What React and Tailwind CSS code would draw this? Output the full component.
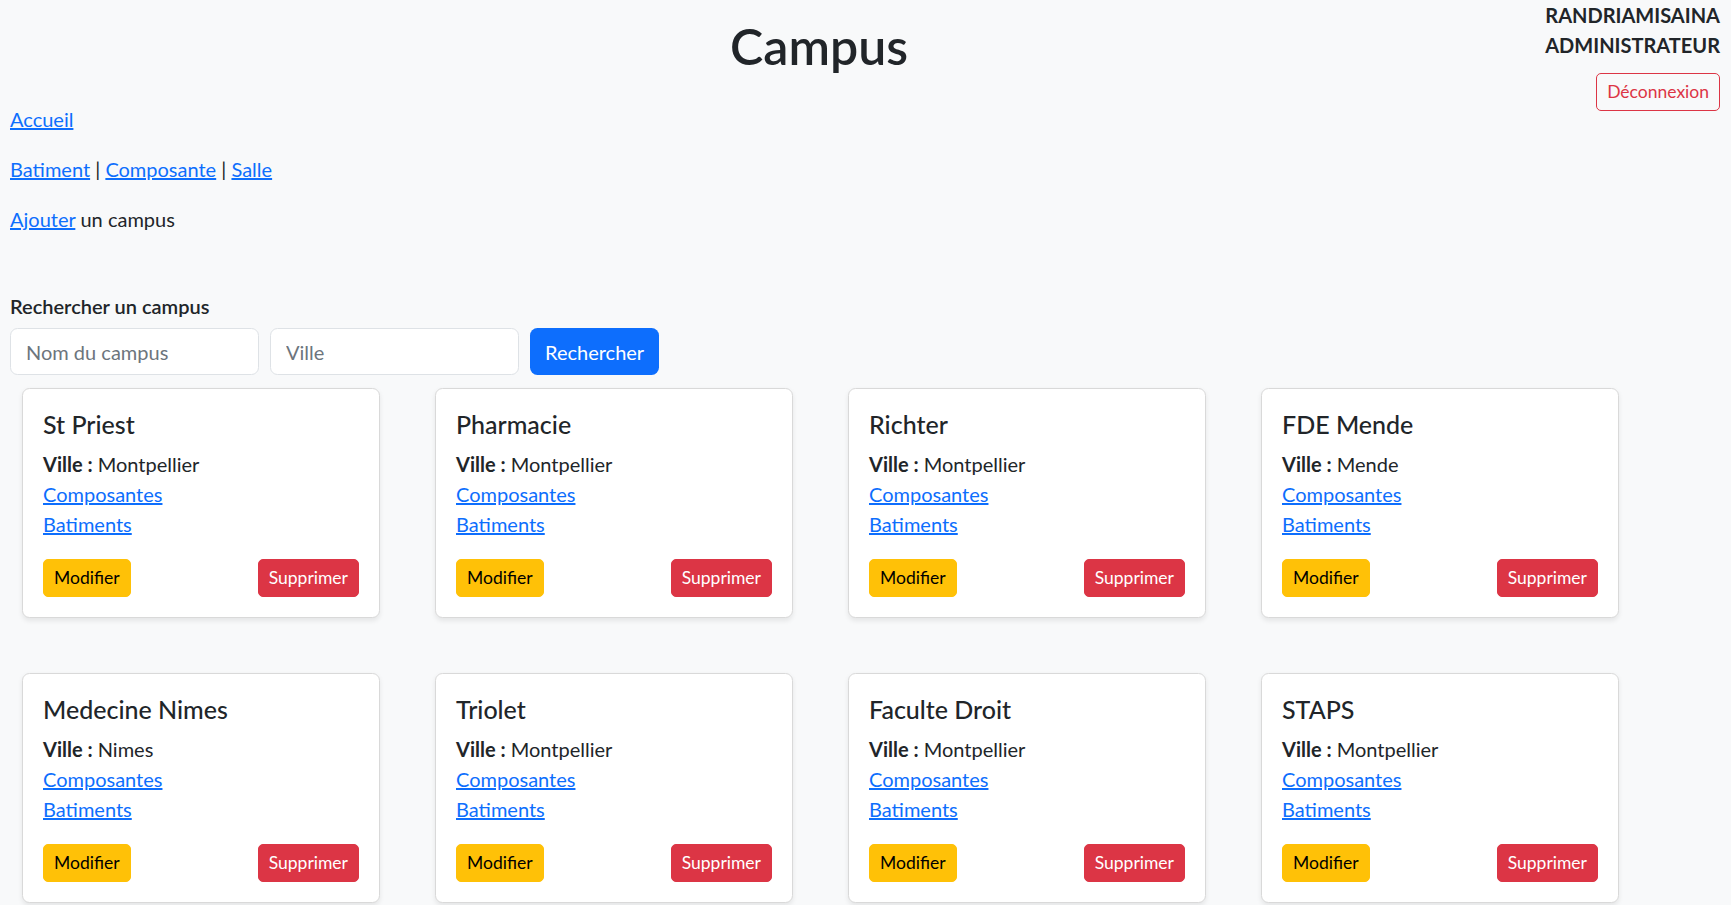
import React from "react";

const campuses = [
  { nom: "St Priest", ville: "Montpellier" },
  { nom: "Pharmacie", ville: "Montpellier" },
  { nom: "Richter", ville: "Montpellier" },
  { nom: "FDE Mende", ville: "Mende" },
  { nom: "Medecine Nimes", ville: "Nimes" },
  { nom: "Triolet", ville: "Montpellier" },
  { nom: "Faculte Droit", ville: "Montpellier" },
  { nom: "STAPS", ville: "Montpellier" },
];

const link = "text-[#0d6efd] underline";

const CampusCard = ({ campus }) => (
  <div className="w-[358px] bg-white border border-[#d9d9d9] rounded-[7.5px] shadow-[0_2.5px_5px_rgba(0,0,0,0.08)] p-[20px]">
    <h5 className="text-[25px] leading-[30px] font-medium mb-[10px]">{campus.nom}</h5>
    <p className="leading-[30px]">
      <b>Ville :</b> {campus.ville}
    </p>
    <p className="leading-[30px]">
      <a href="#" className={link}>Composantes</a>
    </p>
    <p className="leading-[30px]">
      <a href="#" className={link}>Batiments</a>
    </p>
    <div className="flex justify-between mt-[20px]">
      <button className="bg-[#ffc107] text-black text-[17.5px] leading-[26px] px-[10px] py-[5px] border border-[#ffc107] rounded-[5px]">
        Modifier
      </button>
      <button className="bg-[#dc3545] text-white text-[17.5px] leading-[26px] px-[10px] py-[5px] border border-[#dc3545] rounded-[5px]">
        Supprimer
      </button>
    </div>
  </div>
);

export default function App() {
  return (
    <div className="min-h-screen bg-[#f8f9fa] text-[#212529] text-[20px] leading-[30px] font-['Lato','Liberation_Sans',sans-serif]">
      {/* Header */}
      <div className="flex items-start h-[104px]">
        <div className="flex-1 text-center pl-[93px]">
          <h1 className="mt-[16px] text-[50px] leading-[60px] font-semibold">Campus</h1>
        </div>
        <div className="flex flex-col items-end pr-[11px]">
          <div className="font-bold leading-[30px]">RANDRIAMISAINA</div>
          <div className="font-bold leading-[30px]">ADMINISTRATEUR</div>
          <button className="mt-[13px] text-[17.5px] leading-[26px] px-[10px] py-[5px] border border-[#dc3545] text-[#dc3545] rounded-[5px] bg-transparent">
            Déconnexion
          </button>
        </div>
      </div>

      <div className="pl-[10px]">
        <p className="mb-[20px]">
          <a href="#" className={link}>Accueil</a>
        </p>
        <p className="mb-[20px]">
          <a href="#" className={link}>Batiment</a> |{" "}
          <a href="#" className={link}>Composante</a> |{" "}
          <a href="#" className={link}>Salle</a>
        </p>
        <p className="mb-[60px]">
          <a href="#" className={link}>Ajouter</a> un campus
        </p>

        <h6 className="text-[20px] leading-[24px] font-semibold mb-[10px]">Rechercher un campus</h6>
        <form className="flex gap-[11px]" onSubmit={(e) => e.preventDefault()}>
          <input
            type="text"
            placeholder="Nom du campus"
            className="w-[249px] h-[47px] px-[15px] bg-white border border-[#dee2e6] rounded-[7.5px] text-[20px] placeholder:text-[#6c757d] outline-none"
          />
          <input
            type="text"
            placeholder="Ville"
            className="w-[249px] h-[47px] px-[15px] bg-white border border-[#dee2e6] rounded-[7.5px] text-[20px] placeholder:text-[#6c757d] outline-none"
          />
          <button className="h-[47px] px-[15px] bg-[#0d6efd] text-white rounded-[7.5px] text-[20px]">
            Rechercher
          </button>
        </form>

        <div className="mt-[13px] pl-[12px] flex flex-wrap gap-x-[55px] gap-y-[55px] pb-[20px]">
          {campuses.map((c) => (
            <CampusCard key={c.nom} campus={c} />
          ))}
        </div>
      </div>
    </div>
  );
}
